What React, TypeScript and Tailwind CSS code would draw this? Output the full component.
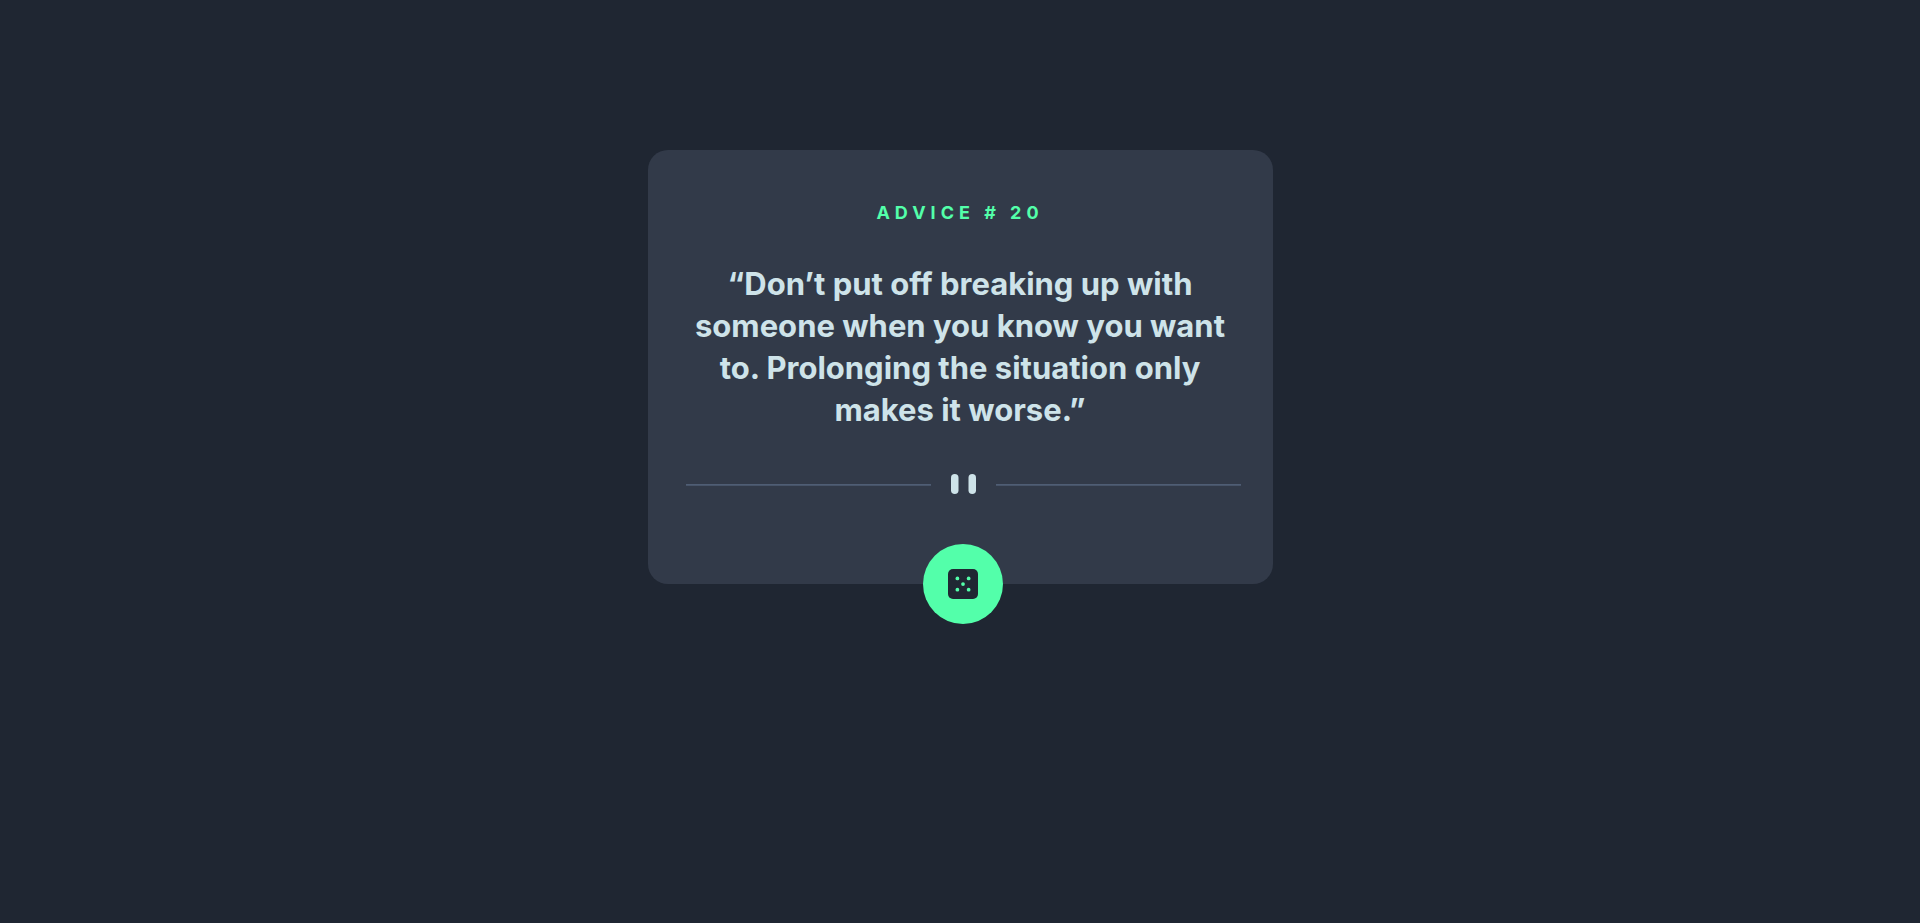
function Divider() {
  return (
    <svg viewBox="0 0 444 16" className="block w-full" aria-hidden="true">
      <path fill="#4F5D74" d="M0 8h196v1.4H0zM248 8h196v1.4H248z" />
      <g fill="#CEE3E9">
        <rect x="212" width="6" height="16" rx="3" />
        <rect x="226" width="6" height="16" rx="3" />
      </g>
    </svg>
  );
}

function DiceIcon() {
  return (
    <svg viewBox="0 0 24 24" className="size-[30px]" aria-hidden="true">
      <rect width="24" height="24" rx="4" fill="#202733" />
      <g fill="#53FFAA">
        <circle cx="7.5" cy="7.5" r="1.5" />
        <circle cx="16.5" cy="7.5" r="1.5" />
        <circle cx="12" cy="12" r="1.5" />
        <circle cx="7.5" cy="16.5" r="1.5" />
        <circle cx="16.5" cy="16.5" r="1.5" />
      </g>
    </svg>
  );
}

export default function App() {
  return (
    <main className="flex min-h-screen items-start justify-center bg-[#1F2632] px-4 pt-[150px] pb-16 font-['Inter',sans-serif]">
      <article className="flex w-full max-w-[625px] flex-col rounded-[20px] bg-[#323A49] px-8 pt-[51px] text-center">
        <h1 className="text-lg leading-6 font-bold tracking-[5px] text-[#53FFAA]">
          ADVICE # 20
        </h1>
        <p className="mt-[38px] text-[31px] leading-[42px] font-bold text-[#CEE3E9]">
          “Don’t put off breaking up with someone when you know you want to.
          Prolonging the situation only makes it worse.”
        </p>
        <div className="flex flex-col items-center pt-[43px] pl-1.5">
          <Divider />
          <button
            type="button"
            aria-label="New advice"
            className="mt-[50px] -mb-10 flex size-20 cursor-pointer items-center justify-center rounded-full bg-[#53FFAA]"
          >
            <DiceIcon />
          </button>
        </div>
      </article>
    </main>
  );
}
